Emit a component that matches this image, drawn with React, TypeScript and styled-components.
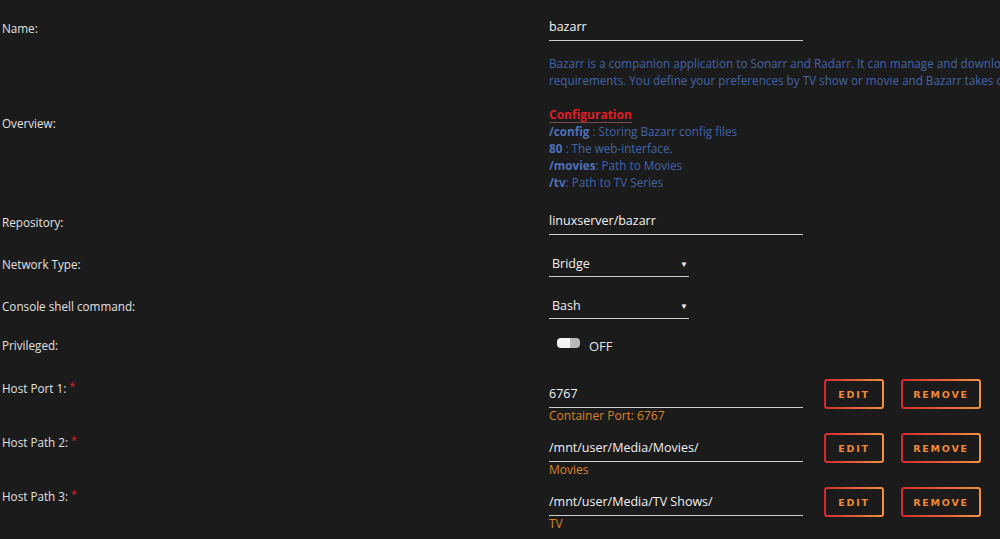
import React from "react";
import styled, { createGlobalStyle } from "styled-components";

const GlobalStyle = createGlobalStyle`
    body{
        margin: 0;
        background-color: #1c1b1c;
        font-family: "Open Sans", "Noto Sans", sans-serif;
        font-size: 12px;
        color: #e2e2e2;
    }
`;

const Page = styled.div`
    width: 1000px;
    height: 539px;
    overflow: hidden;
    padding: 14px 0 0 2px;
    box-sizing: border-box;
`;

const Row = styled.div<{ $top?: number; $align?: string }>`
    display: flex;
    align-items: ${props => props.$align || "center"};
    margin-top: ${props => props.$top || 0}px;
`;

const Label = styled.div<{ $pad?: number }>`
    width: 547px;
    flex-shrink: 0;
    line-height: 14px;
    font-size: 11.7px;
    color: #e0e0e0;
    padding-top: ${props => props.$pad || 0}px;
`;

const Required = styled.span`
    color: #d8232a;
    margin-left: 3px;
    font-size: 11px;
    vertical-align: top;
    position: relative;
    top: -2px;
`;

const Field = styled.div<{ $width?: number }>`
    width: ${props => props.$width || 254}px;
    height: 26px;
    line-height: 26px;
    border-bottom: 1px solid #cfcfcf;
    color: #f2f2f2;
    font-size: 12.5px;
    box-sizing: content-box;
    white-space: nowrap;
`;

const Select = styled(Field)`
    display: flex;
    justify-content: space-between;
    align-items: center;
    height: 25px;
    padding-left: 3px;
    width: 137px;
    .arrow{
        font-size: 8px;
        margin-right: 1px;
        color: #f0f0f0;
    }
`;

const Description = styled.div`
    line-height: 17px;
    color: #4264a8;
    white-space: nowrap;
    overflow: hidden;
    font-size: 11.7px;
    b{
        color: #4d70b8;
    }
`;

const Heading = styled.span`
    display: inline-block;
    color: #dc1f26;
    font-weight: bold;
    line-height: 14px;
    font-size: 12px;
    border-bottom: 1px solid #7a4850;
`;

const Spacer = styled.div`
    height: 17px;
`;

const ToggleWrap = styled.div`
    display: flex;
    align-items: center;
    height: 20px;
    padding-left: 8px;
    gap: 9px;
    span{
        font-size: 13px;
        color: #e4e4e4;
        margin-top: 2px;
    }
`;

const Toggle = styled.div`
    width: 23px;
    height: 10px;
    border-radius: 4px;
    background: linear-gradient(to right, #f4f4f4 55%, #b9b9b9 55%);
    margin-top: -4px;
`;

const PortBlock = styled.div`
    display: flex;
    flex-direction: column;
    padding-top: 2px;
`;

const Hint = styled.div`
    color: #d9832b;
    line-height: 16px;
    font-size: 12px;
`;

const Actions = styled.div`
    display: flex;
    gap: 17px;
    margin-left: 21px;
`;

const Button = styled.button<{ $width: number }>`
    width: ${props => props.$width}px;
    height: 30px;
    border: 2px solid transparent;
    border-radius: 3px;
    background:
        linear-gradient(#1c1b1c, #1c1b1c) padding-box,
        linear-gradient(to right, #d3272f, #f29341) border-box;
    color: #ef8a3d;
    font-family: "DejaVu Sans", sans-serif;
    font-weight: bold;
    font-size: 9.5px;
    letter-spacing: 1.8px;
    padding: 0;
    cursor: pointer;
`;

interface IPath {
    label: string;
    value: string;
    hint: string;
}

const paths: IPath[] = [
    { label: "Host Port 1:", value: "6767", hint: "Container Port: 6767" },
    { label: "Host Path 2:", value: "/mnt/user/Media/Movies/", hint: "Movies" },
    { label: "Host Path 3:", value: "/mnt/user/Media/TV Shows/", hint: "TV" },
];

function App() {
    return (
        <Page>
            <GlobalStyle />
            <Row>
                <Label>Name:</Label>
                <Field>bazarr</Field>
            </Row>
            <Row $top={14}>
                <Label>Overview:</Label>
                <Description>
                    Bazarr is a companion application to Sonarr and Radarr. It can manage and download subtitles based on your requirements.<br />
                    requirements. You define your preferences by TV show or movie and Bazarr takes care of everything for you.
                    <Spacer />
                    <Heading>Configuration</Heading><br />
                    <b>/config</b> : Storing Bazarr config files<br />
                    <b>80</b> : The web-interface.<br />
                    <b>/movies</b>: Path to Movies<br />
                    <b>/tv</b>: Path to TV Series
                </Description>
            </Row>
            <Row $top={17}>
                <Label>Repository:</Label>
                <Field>linuxserver/bazarr</Field>
            </Row>
            <Row $top={16}>
                <Label>Network Type:</Label>
                <Select>Bridge<span className="arrow">▼</span></Select>
            </Row>
            <Row $top={16}>
                <Label>Console shell command:</Label>
                <Select>Bash<span className="arrow">▼</span></Select>
            </Row>
            <Row $top={16}>
                <Label>Privileged:</Label>
                <ToggleWrap><Toggle /><span>OFF</span></ToggleWrap>
            </Row>
            {paths.map((p, i) => (
                <Row key={p.label} $top={i === 0 ? 24 : 9} $align="flex-start">
                    <Label $pad={2}>{p.label}<Required>*</Required></Label>
                    <PortBlock>
                        <Field>{p.value}</Field>
                        <Hint>{p.hint}</Hint>
                    </PortBlock>
                    <Actions>
                        <Button $width={60}>EDIT</Button>
                        <Button $width={80}>REMOVE</Button>
                    </Actions>
                </Row>
            ))}
        </Page>
    );
}

export default App;
